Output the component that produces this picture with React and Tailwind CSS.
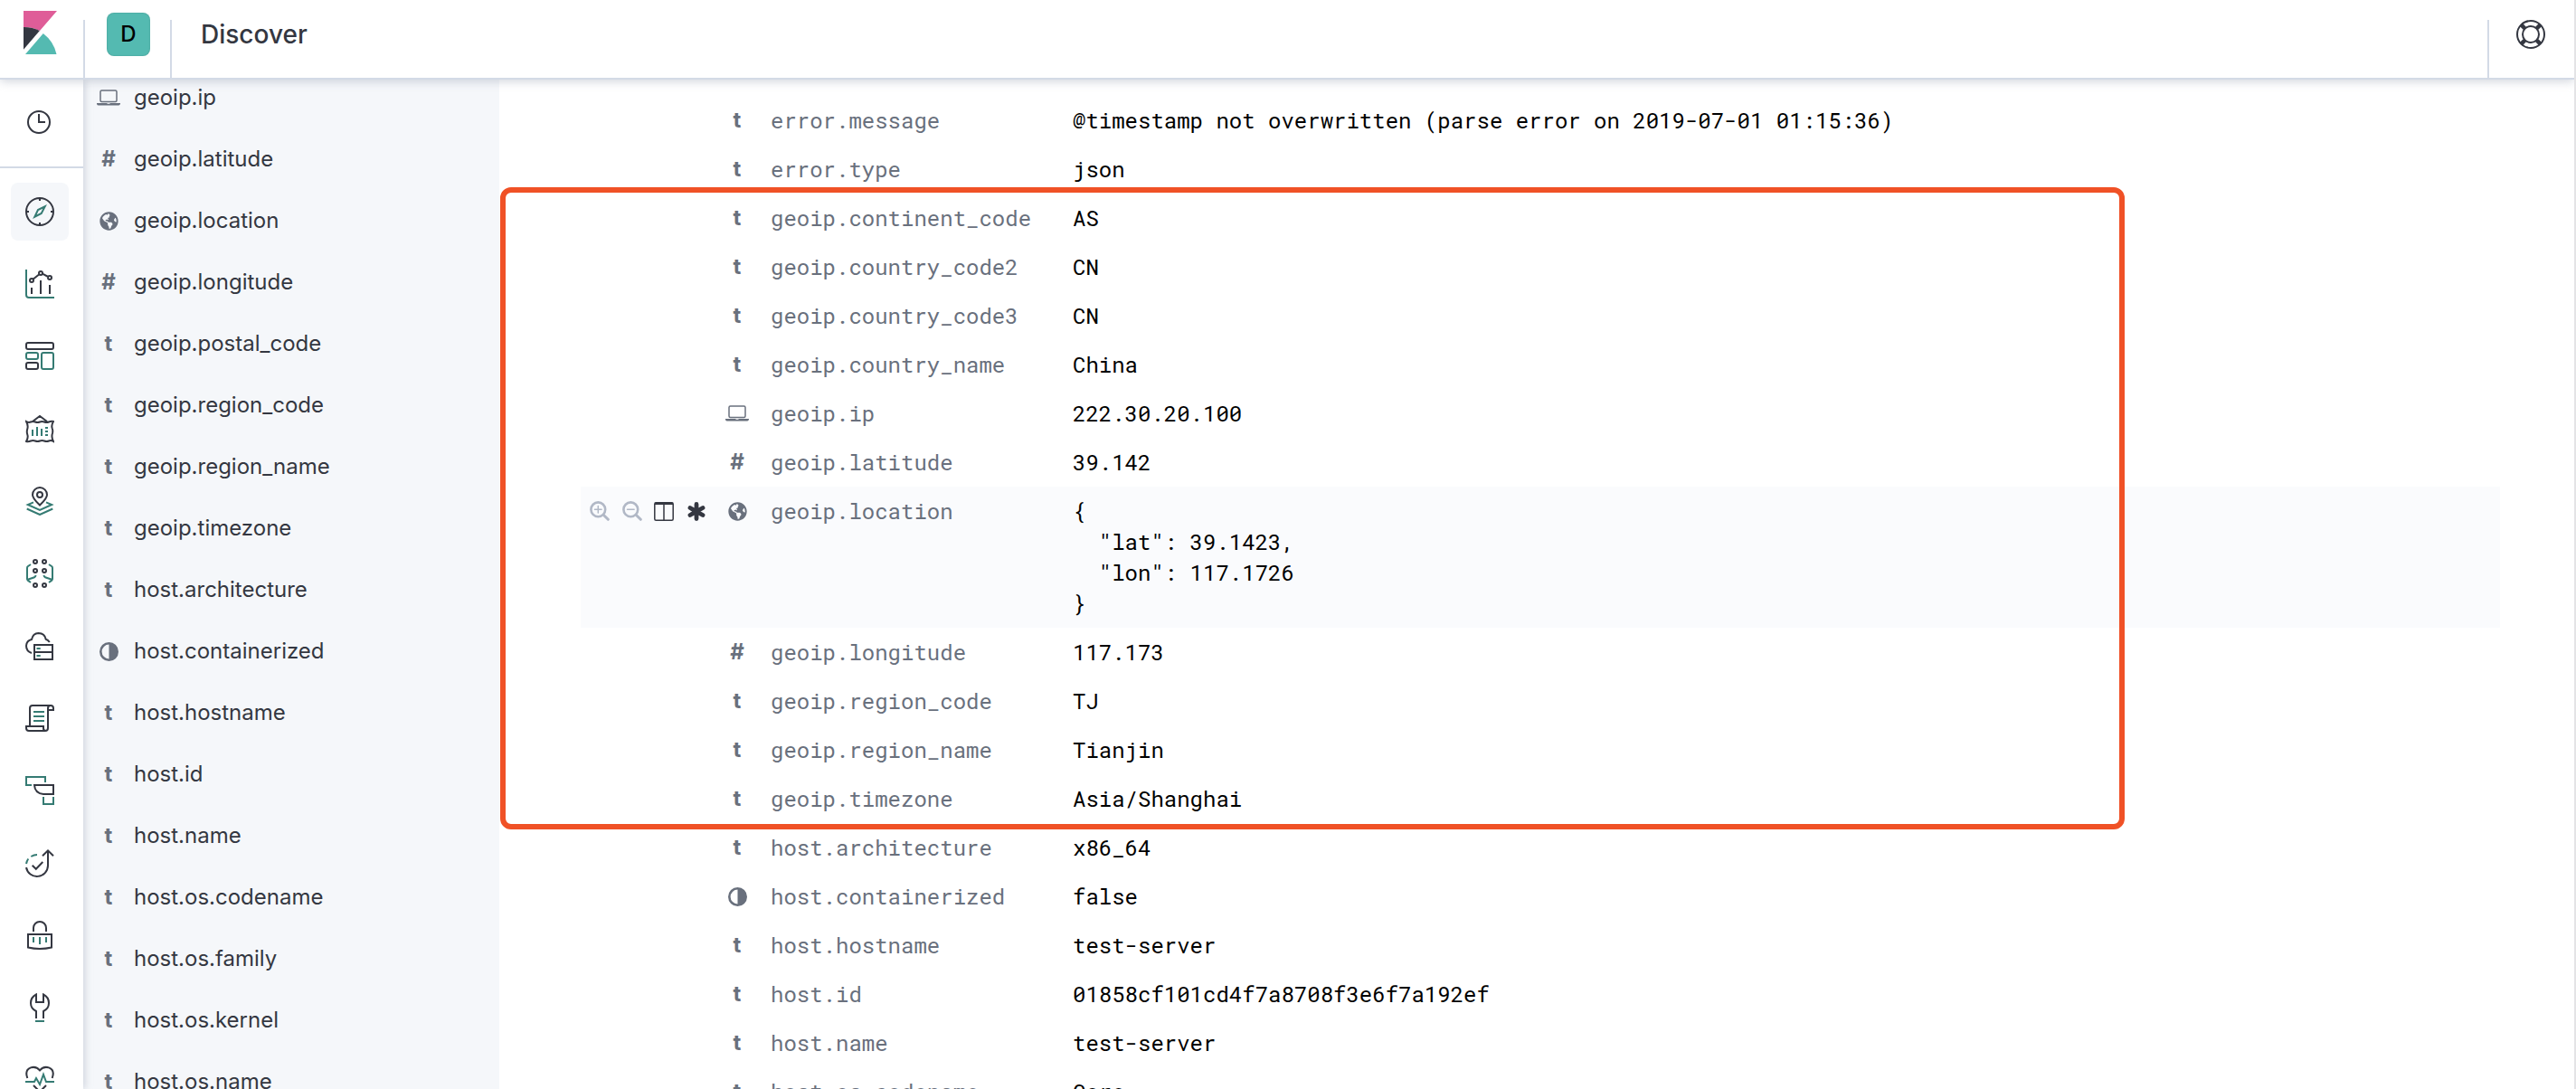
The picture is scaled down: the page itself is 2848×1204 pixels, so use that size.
import { FaGlobeAmericas } from "react-icons/fa";

const INK = "#343741";
const TEAL = "#357b73";

/* ---------- brand and header icons ---------- */

function KibanaLogo() {
  return (
    <svg width="37" height="48" viewBox="0 0 37 48" aria-hidden="true">
      <path fill="#df5d98" d="M0 0H37L18 22Q9.500 17.800 0 18Z" />
      <path fill={INK} d="M0 18Q9.500 17.800 17.800 22L0 42.700Z" />
      <path fill="#54bab1" d="M21.800 25Q33.500 34 36.500 48H2Z" />
    </svg>
  );
}

function HelpIcon() {
  return (
    <svg width="32" height="32" viewBox="0 0 32 32" fill="none" stroke={INK} aria-hidden="true">
      <circle cx="16" cy="16" r="15" strokeWidth="2" />
      <circle cx="16" cy="16" r="9" strokeWidth="2" />
      <path strokeWidth="4.500" d="M5.600 5.600 9.500 9.500M26.400 5.600 22.500 9.500M5.600 26.400 9.500 22.500M26.400 26.400 22.500 22.500" />
    </svg>
  );
}

function ClockIcon() {
  return (
    <svg width="26" height="26" viewBox="0 0 26 26" fill="none" stroke={INK} strokeWidth="2" aria-hidden="true">
      <circle cx="13" cy="13" r="12" />
      <path d="M13 4v9h7" />
    </svg>
  );
}

/* ---------- application icons: ink strokes plus teal strokes ---------- */

const apps = [
  {
    name: "Discover",
    ink: "M16 1a15 15 0 1 0 0 30a15 15 0 1 0 0-30zM16 1v3M16 28v3M1 16h3M28 16h3",
    teal: "M21.700 10.300 17.700 18 10.300 21.700 14 14z",
  },
  {
    name: "Visualize",
    ink: "M7 20v7M17 12v15M27 17v10M7 10a2 2 0 1 0 0 4a2 2 0 1 0 0-4zM17 2a2 2 0 1 0 0 4a2 2 0 1 0 0-4zM27 7a2 2 0 1 0 0 4a2 2 0 1 0 0-4zM8.500 10.700 15.400 5.300M19 4.700 25.200 8",
    teal: "M1 0v28a3 3 0 0 0 3 3h28",
  },
  {
    name: "Dashboard",
    ink: "M3 1h26a2 2 0 0 1 2 2v3a2 2 0 0 1-2 2h-26a2 2 0 0 1-2-2v-3a2 2 0 0 1 2-2zM3 23h9a2 2 0 0 1 2 2v3a2 2 0 0 1-2 2h-9a2 2 0 0 1-2-2v-3a2 2 0 0 1 2-2z",
    teal: "M3 12h9a2 2 0 0 1 2 2v3a2 2 0 0 1-2 2h-9a2 2 0 0 1-2-2v-3a2 2 0 0 1 2-2zM20 12h9a2 2 0 0 1 2 2v14a2 2 0 0 1-2 2h-9a2 2 0 0 1-2-2v-14a2 2 0 0 1 2-2z",
  },
  {
    name: "Canvas",
    ink: "M8 8 16 2 24 8M1 8Q3.500 9.500 6 8.500T11 8.500T16 8.500T21 8.500T26 8.500T31 8Q28.500 12 29.700 15.500Q30.700 18 30 21Q28.500 25 31 30Q28.500 28.500 26 29.500T21 29.500T16 29.500T11 29.500T6 29.500T1 30Q3.500 26 2.300 22.500Q1.300 19.500 2.200 16.500Q3.500 12.500 1 8z",
    teal: "M8 17v7M13 14v10M18 16v8M22 15h3M22 19h3M22 23h3",
  },
  {
    name: "Maps",
    ink: "M16 20.500C12 16.500 8 13 8 9a8 8 0 0 1 16 0C24 13 20 16.500 16 20.500zM16 6a3 3 0 1 0 0 6a3 3 0 1 0 0-6z",
    teal: "M9 17.400 2.800 20 16 26 29.200 20 23 17.400M1.700 24.500 16 31 30.300 24.500",
  },
  {
    name: "Machine Learning",
    ink: "M11 1a2 2 0 1 0 0 4a2 2 0 1 0 0-4zM21 1a2 2 0 1 0 0 4a2 2 0 1 0 0-4zM11 11a2 2 0 1 0 0 4a2 2 0 1 0 0-4zM21 11a2 2 0 1 0 0 4a2 2 0 1 0 0-4zM11 27a2 2 0 1 0 0 4a2 2 0 1 0 0-4zM21 27a2 2 0 1 0 0 4a2 2 0 1 0 0-4z",
    teal: "M6 6 2.700 8.200Q2 8.800 2 10v12Q2 23 2.700 23.600L6 26M26 6 29.300 8.200Q30 8.800 30 10v12Q30 23 29.300 23.600L26 26M2 23 10 20.300Q11.500 19.500 11.500 18M30 23 22 20.300Q20.500 19.500 20.500 18",
  },
  {
    name: "Infrastructure",
    ink: "M7 24Q1 22 1 16Q1.500 10 7 9Q8.500 2 14.500 2Q21.500 2.300 22.700 8.700Q25 9.300 26.800 12M10 15h20v16h-20zM10 23h20",
    teal: "M12.500 19h4.200M12.500 27h4.200",
  },
  {
    name: "Logs",
    ink: "M5 25V5a3 3 0 0 1 3-3h20M25 27V5a3 3 0 0 1 6 0v2h-6M25 26v1a3 3 0 0 1-3 3H4a3 3 0 0 1-3-3v-2h19v2a3 3 0 0 0 2 3",
    teal: "M9 9h12M9 14h12M9 19h12",
  },
  {
    name: "APM",
    ink: "M10 10h21v10H20Q10.500 19 10 10z",
    teal: "M7 10H1V1h21v6M20 23v8h11v-8",
  },
  {
    name: "Uptime",
    ink: "M1 21A12.100 12.100 0 0 0 25 19V3M19 8.300 25 2.300 31 8.300M7.700 18.700 11.800 22.800 19.300 15",
    teal: "M1 17Q1.500 14 3.300 11.500M6.300 9Q9.500 7 13 7",
  },
  {
    name: "SIEM",
    ink: "M9 12V8a7 7 0 0 1 14 0v4M3 15h26v14.500Q16 32.500 3 29.500z",
    teal: "M9 18v6M16 18v8M23 18v6",
  },
  {
    name: "Dev Tools",
    ink: "M12 28V20Q6 17 6 11Q6 4.500 12 1.500V10H20V1.500Q26 4.500 26 11Q26 17 20 20V28",
    teal: "M11 31h10",
  },
  {
    name: "Stack Monitoring",
    ink: "M2.300 14Q-1 5 6 2.400Q12 0.500 16 5.500Q20 0.500 26 2.400Q33 5 29.700 14M9 22 16 29 23 22",
    teal: "M0 18h10l2-4 4 7 4-11 3 8h9",
  },
];

function AppIcon({ ink, teal }) {
  return (
    <svg width="32" height="32" viewBox="0 0 32 32" fill="none" strokeWidth="2" aria-hidden="true">
      <path stroke={TEAL} d={teal} />
      <path stroke={INK} d={ink} />
    </svg>
  );
}

/* ---------- field type marks ---------- */

function FieldType({ type }) {
  if (type === "ip") {
    return (
      <svg width="26" height="18" viewBox="0 0 26 18" aria-label="IP field">
        <rect x="4" y="1" width="18" height="12.500" rx="1.500" fill="none" stroke="currentColor" strokeWidth="1.500" />
        <path fill="currentColor" d="M0 15h11q.5.800 1.200.800h1.600q.700 0 1.200-.800h11v1q-1 1.500-2 1.500H2q-1.500 0-2-1.500z" />
      </svg>
    );
  }
  if (type === "geo") return <FaGlobeAmericas size={21} aria-label="Geo point field" />;
  if (type === "bool") {
    return (
      <svg width="21" height="21" viewBox="0 0 21 21" aria-label="Boolean field">
        <circle cx="10.500" cy="10.500" r="9.200" fill="none" stroke="currentColor" strokeWidth="2.600" />
        <path fill="currentColor" d="M10.500 1a9.500 9.500 0 0 1 0 19z" />
      </svg>
    );
  }
  return <span className="font-[Inter,sans-serif] text-2xl leading-none font-bold">{type}</span>;
}

/* ---------- row actions ---------- */

function Magnifier({ plus }) {
  return (
    <svg width="22" height="22" viewBox="0 0 22 22" fill="none" stroke="currentColor" strokeLinecap="round" aria-hidden="true">
      <circle cx="9.300" cy="9.300" r="7.900" strokeWidth="2.600" />
      <path strokeWidth="3" d="M15.700 15.700 20.300 20.300" />
      <path strokeWidth="1.500" d={plus ? "M5.500 9.300h7.600M9.300 5.500v7.600" : "M5.500 9.300h7.600"} />
    </svg>
  );
}

function RowActions() {
  return (
    <div className="flex h-[34px] items-center">
      <button type="button" aria-label="Filter for value" disabled className="w-9 text-[#b1b8c6]">
        <Magnifier plus />
      </button>
      <button type="button" aria-label="Filter out value" disabled className="w-9 text-[#b1b8c6]">
        <Magnifier />
      </button>
      <button type="button" aria-label="Toggle column in table" className="w-9 text-[#343741]">
        <svg width="22" height="21" viewBox="0 0 22 21" fill="none" stroke="currentColor" aria-hidden="true">
          <rect x=".8" y=".8" width="20.400" height="19.400" rx="1.500" strokeWidth="1.500" />
          <path strokeWidth="2.400" d="M1 1.800h20" />
          <path strokeWidth="1.500" d="M11 2v18" />
        </svg>
      </button>
      <button type="button" aria-label="Filter for field present" className="w-9 text-[#343741]">
        <svg width="22" height="21" viewBox="0 0 22 21" stroke="currentColor" strokeWidth="4.800" strokeLinecap="round" aria-hidden="true">
          <path d="M11 2.400v16.200M4 6.500l14 8M18 6.500l-14 8" />
        </svg>
      </button>
    </div>
  );
}

/* ---------- data ---------- */

const sidebarFields = [
  ["ip", "geoip.ip"],
  ["#", "geoip.latitude"],
  ["geo", "geoip.location"],
  ["#", "geoip.longitude"],
  ["t", "geoip.postal_code"],
  ["t", "geoip.region_code"],
  ["t", "geoip.region_name"],
  ["t", "geoip.timezone"],
  ["t", "host.architecture"],
  ["bool", "host.containerized"],
  ["t", "host.hostname"],
  ["t", "host.id"],
  ["t", "host.name"],
  ["t", "host.os.codename"],
  ["t", "host.os.family"],
  ["t", "host.os.kernel"],
  ["t", "host.os.name"],
];

const rows = [
  ["t", "ecs.version", "1.0.0"],
  ["t", "error.message", "@timestamp not overwritten (parse error on 2019-07-01 01:15:36)"],
  ["t", "error.type", "json"],
  ["t", "geoip.continent_code", "AS"],
  ["t", "geoip.country_code2", "CN"],
  ["t", "geoip.country_code3", "CN"],
  ["t", "geoip.country_name", "China"],
  ["ip", "geoip.ip", "222.30.20.100"],
  ["#", "geoip.latitude", "39.142"],
  ["geo", "geoip.location", '{\n  "lat": 39.1423,\n  "lon": 117.1726\n}'],
  ["#", "geoip.longitude", "117.173"],
  ["t", "geoip.region_code", "TJ"],
  ["t", "geoip.region_name", "Tianjin"],
  ["t", "geoip.timezone", "Asia/Shanghai"],
  ["t", "host.architecture", "x86_64"],
  ["bool", "host.containerized", "false"],
  ["t", "host.hostname", "test-server"],
  ["t", "host.id", "01858cf101cd4f7a8708f3e6f7a192ef"],
  ["t", "host.name", "test-server"],
  ["t", "host.os.codename", "Core"],
];

const HOVERED = "geoip.location";

/* ---------- page ---------- */

function Header() {
  return (
    <header className="z-20 flex shrink-0 border-b-2 border-[#d3dae6] bg-white shadow-[0_2px_10px_rgba(152,162,179,0.45)]">
      <a href="#home" aria-label="Kibana home" className="flex w-[92px] items-start pt-3 pl-[26px]">
        <KibanaLogo />
      </a>
      <div className="mt-[22px] h-16 w-0.5 bg-[#d3dae6]" />
      <div className="flex w-[94px] pt-3.5 pl-6">
        <button
          type="button"
          aria-label="Default space"
          className="h-12 w-12 rounded-lg bg-[#54bab1] text-2xl font-medium text-black shadow-[inset_0_0_2px_rgba(0,0,0,0.2)]"
        >
          D
        </button>
      </div>
      <div className="mt-[22px] h-16 w-0.5 bg-[#d3dae6]" />
      <h1 className="pt-[18px] pl-8 text-[28px] leading-10 font-medium">Discover</h1>
      <div className="mt-[22px] ml-auto h-16 w-0.5 bg-[#d3dae6]" />
      <button type="button" aria-label="Help" className="flex w-[94px] pt-[22px] pl-[30px]">
        <HelpIcon />
      </button>
    </header>
  );
}

function SideNav() {
  return (
    <nav className="z-10 w-[92px] shrink-0 bg-white shadow-[2px_0_8px_rgba(152,162,179,0.4)]">
      <a href="#recent" aria-label="Recently viewed" className="flex h-[98px] items-start border-b-2 border-[#d3dae6] pt-[34px] pl-[30px]">
        <ClockIcon />
      </a>
      <ul className="flex flex-col gap-4 pt-4 pl-3">
        {apps.map((app, i) => (
          <li key={app.name}>
            <a
              href={"#" + i}
              aria-label={app.name}
              className={
                i === 0
                  ? "flex h-16 w-16 items-center justify-center rounded-lg bg-[#f5f7fa]"
                  : "flex h-16 w-16 items-center justify-center rounded-lg"
              }
            >
              <AppIcon ink={app.ink} teal={app.teal} />
            </a>
          </li>
        ))}
      </ul>
    </nav>
  );
}

function FieldList() {
  return (
    <aside className="w-[460px] shrink-0 overflow-hidden bg-[#f5f7fa]">
      <ul className="-mt-3.5">
        {sidebarFields.map(([type, name]) => (
          <li key={name}>
            <button type="button" className="flex h-[68px] w-full items-center text-left text-2xl">
              <span className="flex w-14 justify-center text-[#69707d]">
                <FieldType type={type} />
              </span>
              {name}
            </button>
          </li>
        ))}
      </ul>
    </aside>
  );
}

function DocTable() {
  return (
    <main className="relative min-w-0 flex-1 overflow-hidden pr-[82px] pl-[90px]">
      <table className="-mt-9 w-full table-fixed font-['Roboto_Mono','Liberation_Mono',monospace] text-2xl leading-[34px]">
        <colgroup>
          <col className="w-[152px]" />
          <col className="w-[42px]" />
          <col className="w-[334px]" />
          <col />
        </colgroup>
        <tbody>
          {rows.map(([type, name, value]) => (
            <tr key={name} className={name === HOVERED ? "bg-[#fafbfd]" : ""}>
              <td className="py-2.5 pl-2.5 align-top">{name === HOVERED && <RowActions />}</td>
              <td className="py-2.5 align-top text-[#69707d]">
                <span className="flex h-[34px] items-center justify-center">
                  <FieldType type={type} />
                </span>
              </td>
              <th scope="row" className="py-2.5 pl-4 text-left align-top font-normal text-[#69707d]">
                {name}
              </th>
              <td className="py-2.5 pl-4 align-top whitespace-pre text-black">{value}</td>
            </tr>
          ))}
        </tbody>
      </table>
      <div className="pointer-events-none absolute top-[119px] right-[497px] left-px h-[710px] rounded-xl border-6 border-[#f05126]" />
    </main>
  );
}

export default function App() {
  return (
    <div className="flex h-screen flex-col overflow-hidden border-r-2 border-[#e4e4e6] bg-white font-[Inter,sans-serif] text-[#343741]">
      <Header />
      <div className="flex min-h-0 flex-1">
        <SideNav />
        <FieldList />
        <DocTable />
      </div>
    </div>
  );
}
